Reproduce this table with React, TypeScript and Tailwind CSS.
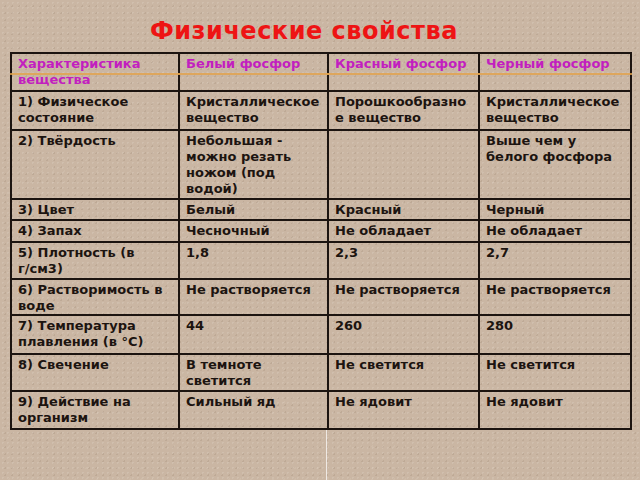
import React from 'react';

const rows: { h: string; cells: string[] }[] = [
  { h: 'h-[39px]', cells: ['1) Физическое состояние', 'Кристаллическое вещество', 'Порошкообразное вещество', 'Кристаллическое вещество'] },
  { h: 'h-[69px]', cells: ['2) Твёрдость', 'Небольшая - можно резать ножом (под водой)', '', 'Выше чем у белого фосфора'] },
  { h: 'h-[21px]', cells: ['3) Цвет', 'Белый', 'Красный', 'Черный'] },
  { h: 'h-[22px]', cells: ['4) Запах', 'Чесночный', 'Не обладает', 'Не обладает'] },
  { h: 'h-[37px]', cells: ['5) Плотность (в г/\u2060см3)', '1,8', '2,3', '2,7'] },
  { h: 'h-[35px]', cells: ['6) Растворимость в воде', 'Не растворяется', 'Не растворяется', 'Не растворяется'] },
  { h: 'h-[39px]', cells: ['7) Температура плавления (в °С)', '44', '260', '280'] },
  { h: 'h-[37px]', cells: ['8) Свечение', 'В темноте светится', 'Не светится', 'Не светится'] },
  { h: 'h-[38px]', cells: ['9) Действие на организм', 'Сильный яд', 'Не ядовит', 'Не ядовит'] },
];

const headers = ['Характеристика вещества', 'Белый фосфор', 'Красный фосфор', 'Черный фосфор'];

export default function App() {
  return (
    <div className="flex h-[480px] w-[640px] flex-col overflow-hidden bg-[#cab6a3] bg-[radial-gradient(rgba(255,255,255,0.12)_1px,transparent_1px),radial-gradient(rgba(105,78,58,0.12)_1px,transparent_1px),radial-gradient(rgba(240,225,210,0.12)_1px,transparent_1px)] bg-[length:5px_5px,7px_7px,11px_11px] bg-[position:0_0,2px_3px,4px_1px] font-['DejaVu_Sans',sans-serif]">
      {/* Title */}
      <h1 className="pl-[150px] pt-[16px] text-[24px] font-bold leading-[30px] tracking-[0.5px] text-[#ee1414]">
        Физические свойства
      </h1>

      {/* Table */}
      <div className="mt-[6px] ml-[10px] w-[620px]">
        <table className="w-full table-fixed border-collapse border-2 border-[#1c1410] text-[13px] font-bold leading-[16px] text-[#1c1410]">
          <colgroup>
            <col className="w-[168px]" />
            <col className="w-[149px]" />
            <col className="w-[151px]" />
            <col className="w-[152px]" />
          </colgroup>
          <thead>
            <tr className="h-[38px]">
              {headers.map((t, i) => (
                <th
                  key={i}
                  className="border-2 border-[#1c1410] px-[6px] pt-[2px] align-top text-left text-[13px] font-bold leading-[16px] text-[#c21fbf]"
                >
                  <div className="relative">
                    {t}
                    {/* thin orange line running through header */}
                    <div className="absolute -left-[8px] -right-[8px] top-[17px] h-[1.5px] bg-[#e2a24a]/80" />
                  </div>
                </th>
              ))}
            </tr>
          </thead>
          <tbody>
            {rows.map((r, i) => (
              <tr key={i} className={r.h}>
                {r.cells.map((c, j) => (
                  <td
                    key={j}
                    className="break-words border-2 border-[#1c1410] px-[6px] pt-[2px] align-top"
                  >
                    {c}
                  </td>
                ))}
              </tr>
            ))}
          </tbody>
        </table>
      </div>

      {/* faint slide guide line below the table */}
      <div className="ml-[326px] w-px flex-1 bg-white/70" />
    </div>
  );
}
